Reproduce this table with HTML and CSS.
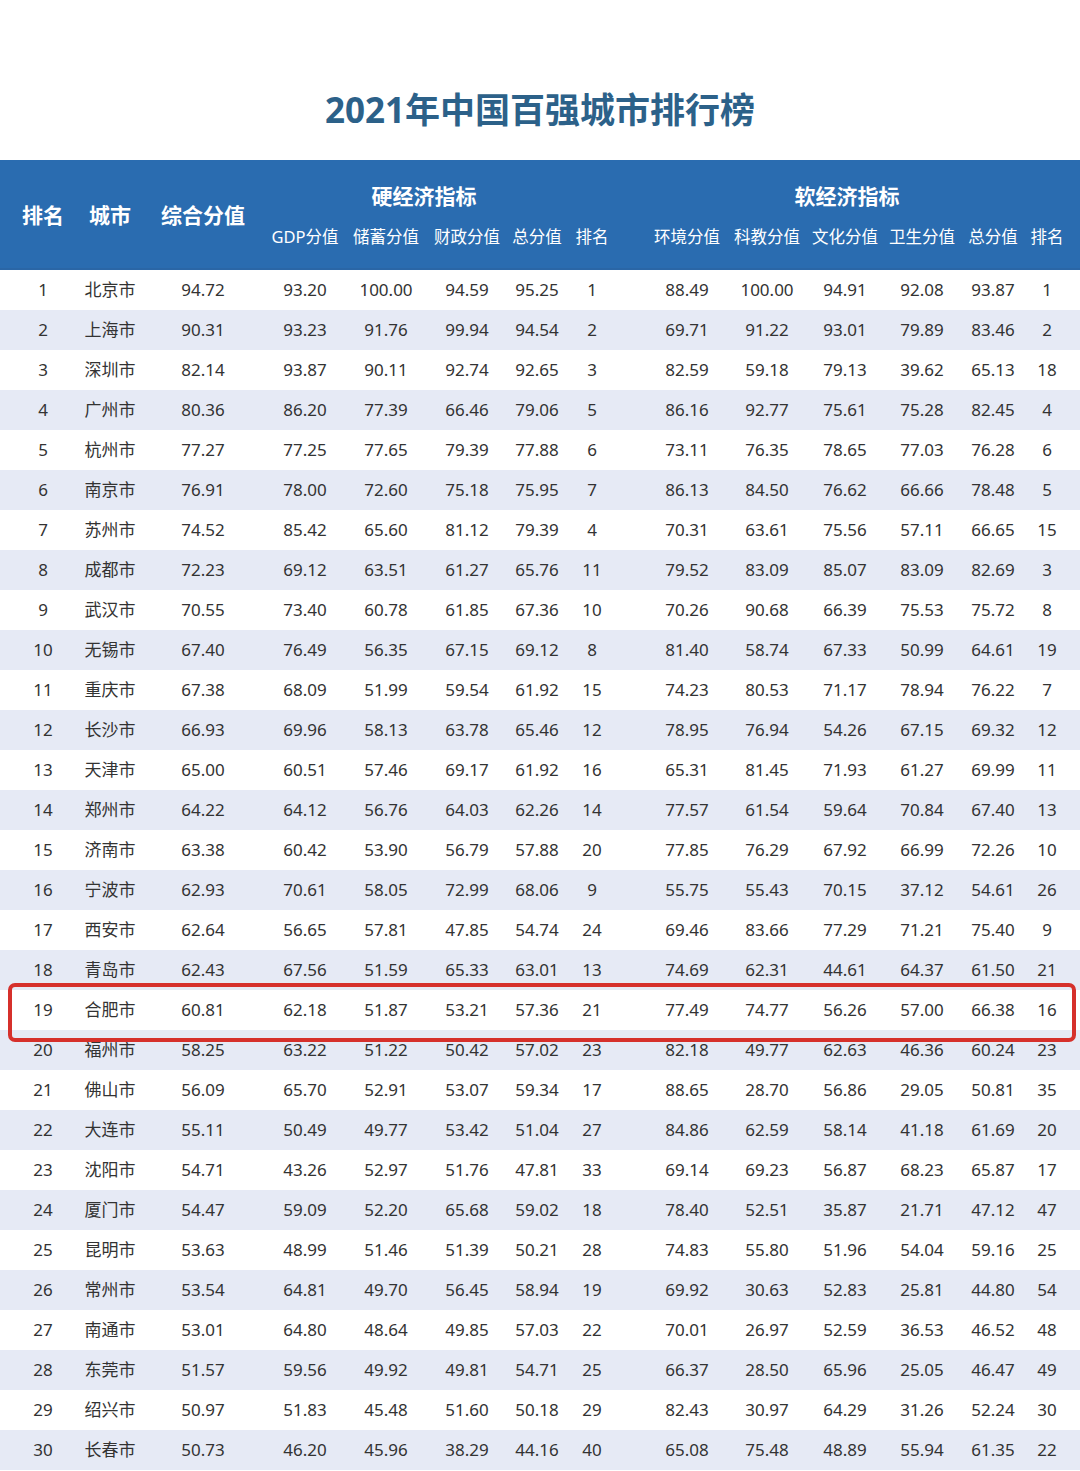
FILE: index.html
```html
<!DOCTYPE html>
<html lang="zh-CN">
<head>
<meta charset="utf-8">
<title>2021年中国百强城市排行榜</title>
<link rel="stylesheet" href="styles.css">
</head>
<body>
<div class="page">
  <h1 class="title">2021年中国百强城市排行榜</h1>
  <div class="head">
    <div class="h-main c1">排名</div>
    <div class="h-main c2">城市</div>
    <div class="h-main c3">综合分值</div>
    <div class="h-group g-hard">硬经济指标</div>
    <div class="h-group g-soft">软经济指标</div>
    <div class="h-sub">GDP分值</div>
    <div class="h-sub">储蓄分值</div>
    <div class="h-sub">财政分值</div>
    <div class="h-sub">总分值</div>
    <div class="h-sub">排名</div>
    <div class="h-sub c9">环境分值</div>
    <div class="h-sub">科教分值</div>
    <div class="h-sub">文化分值</div>
    <div class="h-sub">卫生分值</div>
    <div class="h-sub">总分值</div>
    <div class="h-sub">排名</div>
  </div>
  <div class="body" id="rows"></div>
</div>
<script src="app.js"></script>
</body>
</html>
```
FILE: app.js
```js
const data = [
["1","北京市","94.72","93.20","100.00","94.59","95.25","1","88.49","100.00","94.91","92.08","93.87","1"],
["2","上海市","90.31","93.23","91.76","99.94","94.54","2","69.71","91.22","93.01","79.89","83.46","2"],
["3","深圳市","82.14","93.87","90.11","92.74","92.65","3","82.59","59.18","79.13","39.62","65.13","18"],
["4","广州市","80.36","86.20","77.39","66.46","79.06","5","86.16","92.77","75.61","75.28","82.45","4"],
["5","杭州市","77.27","77.25","77.65","79.39","77.88","6","73.11","76.35","78.65","77.03","76.28","6"],
["6","南京市","76.91","78.00","72.60","75.18","75.95","7","86.13","84.50","76.62","66.66","78.48","5"],
["7","苏州市","74.52","85.42","65.60","81.12","79.39","4","70.31","63.61","75.56","57.11","66.65","15"],
["8","成都市","72.23","69.12","63.51","61.27","65.76","11","79.52","83.09","85.07","83.09","82.69","3"],
["9","武汉市","70.55","73.40","60.78","61.85","67.36","10","70.26","90.68","66.39","75.53","75.72","8"],
["10","无锡市","67.40","76.49","56.35","67.15","69.12","8","81.40","58.74","67.33","50.99","64.61","19"],
["11","重庆市","67.38","68.09","51.99","59.54","61.92","15","74.23","80.53","71.17","78.94","76.22","7"],
["12","长沙市","66.93","69.96","58.13","63.78","65.46","12","78.95","76.94","54.26","67.15","69.32","12"],
["13","天津市","65.00","60.51","57.46","69.17","61.92","16","65.31","81.45","71.93","61.27","69.99","11"],
["14","郑州市","64.22","64.12","56.76","64.03","62.26","14","77.57","61.54","59.64","70.84","67.40","13"],
["15","济南市","63.38","60.42","53.90","56.79","57.88","20","77.85","76.29","67.92","66.99","72.26","10"],
["16","宁波市","62.93","70.61","58.05","72.99","68.06","9","55.75","55.43","70.15","37.12","54.61","26"],
["17","西安市","62.64","56.65","57.81","47.85","54.74","24","69.46","83.66","77.29","71.21","75.40","9"],
["18","青岛市","62.43","67.56","51.59","65.33","63.01","13","74.69","62.31","44.61","64.37","61.50","21"],
["19","合肥市","60.81","62.18","51.87","53.21","57.36","21","77.49","74.77","56.26","57.00","66.38","16"],
["20","福州市","58.25","63.22","51.22","50.42","57.02","23","82.18","49.77","62.63","46.36","60.24","23"],
["21","佛山市","56.09","65.70","52.91","53.07","59.34","17","88.65","28.70","56.86","29.05","50.81","35"],
["22","大连市","55.11","50.49","49.77","53.42","51.04","27","84.86","62.59","58.14","41.18","61.69","20"],
["23","沈阳市","54.71","43.26","52.97","51.76","47.81","33","69.14","69.23","56.87","68.23","65.87","17"],
["24","厦门市","54.47","59.09","52.20","65.68","59.02","18","78.40","52.51","35.87","21.71","47.12","47"],
["25","昆明市","53.63","48.99","51.46","51.39","50.21","28","74.83","55.80","51.96","54.04","59.16","25"],
["26","常州市","53.54","64.81","49.70","56.45","58.94","19","69.92","30.63","52.83","25.81","44.80","54"],
["27","南通市","53.01","64.80","48.64","49.85","57.03","22","70.01","26.97","52.59","36.53","46.52","48"],
["28","东莞市","51.57","59.56","49.92","49.81","54.71","25","66.37","28.50","65.96","25.05","46.47","49"],
["29","绍兴市","50.97","51.83","45.48","51.60","50.18","29","82.43","30.97","64.29","31.26","52.24","30"],
["30","长春市","50.73","46.20","45.96","38.29","44.16","40","65.08","75.48","48.89","55.94","61.35","22"]
];
const rows = document.getElementById('rows');
data.forEach((r, i) => {
  const row = document.createElement('div');
  row.className = 'row' + (i % 2 ? ' alt' : '') + (r[1] === '合肥市' ? ' hl' : '');
  r.forEach((v, j) => {
    const c = document.createElement('div');
    c.className = 'cell c' + (j + 1);
    c.textContent = v;
    row.appendChild(c);
  });
  rows.appendChild(row);
});
```
FILE: styles.css
```css
html, body {
  margin: 0;
  padding: 0;
  background: #ffffff;
}
body {
  font-family: "Noto Sans", "Noto Sans CJK SC", sans-serif;
  color: #333333;
}
.page {
  width: 1080px;
}
.title {
  margin: 0;
  padding: 86px 0 26px;
  line-height: 48px;
  font-size: 35px;
  font-weight: 700;
  text-align: center;
  color: #2c6189;
}
.head, .row {
  display: grid;
  grid-template-columns: 80px 62px 122px 82px 80px 82px 58px 52px 110px 78px 78px 76px 66px 42px;
}
.head {
  background: #2a6cb0;
  color: #ffffff;
  height: 110px;
  box-sizing: border-box;
  padding: 17px 0 19px;
  grid-template-rows: 36px 30px;
  row-gap: 8px;
  box-shadow: inset 0 -2px 0 #2a66a6;
}
.head > div {
  text-align: center;
  white-space: nowrap;
  display: flex;
  align-items: center;
  justify-content: center;
}
.h-main {
  grid-row: 1 / 3;
  font-size: 21px;
  font-weight: 700;
}
.h-main.c1 { padding-left: 6px; }
.h-main.c2 { padding-right: 2px; }
.h-group {
  grid-row: 1;
  font-size: 21px;
  font-weight: 700;
}
.g-hard { grid-column: 4 / 9; padding-right: 34px; }
.g-soft { grid-column: 9 / 15; padding-left: 8px; }
.h-sub {
  grid-row: 2;
  font-size: 16.5px;
  font-weight: 400;
}
.h-sub.c9 { padding-left: 28px; }
.row {
  height: 40px;
  align-items: center;
  background: #ffffff;
  font-size: 17px;
}
.row.alt {
  background: #e6eaf5;
}
.row.hl {
  position: relative;
  z-index: 1;
}
.cell {
  text-align: center;
  white-space: nowrap;
  line-height: 24px;
}
.cell.c1 { padding-left: 6px; }
.cell.c2 { padding-right: 2px; }
.cell.c9 { padding-left: 28px; }
.row.hl::after {
  content: "";
  position: absolute;
  left: 8px;
  right: 4px;
  top: -7px;
  bottom: -12px;
  border: 4px solid #d6302b;
  border-radius: 7px;
  pointer-events: none;
}
```
